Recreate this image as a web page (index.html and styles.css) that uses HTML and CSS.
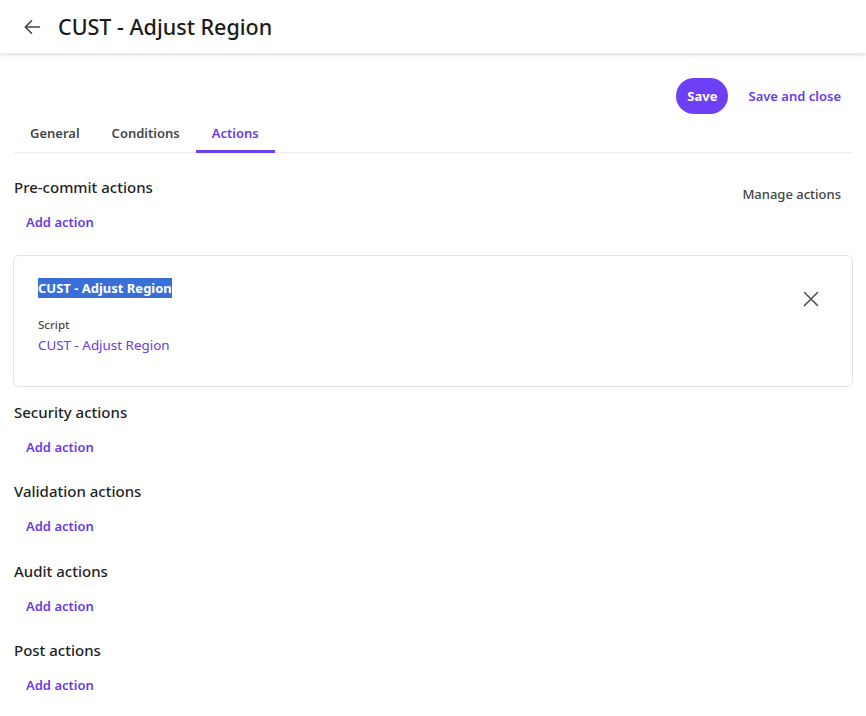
FILE: index.html
```html
<!DOCTYPE html>
<html>
<head>
<meta charset="utf-8">
<link rel="stylesheet" href="styles.css">
</head>
<body>
<header class="topbar">
  <svg class="back" width="18" height="18" viewBox="0 0 18 18"><path d="M16.5 9H2.5M8.5 2.8L2.3 9l6.2 6.2" fill="none" stroke="#424242" stroke-width="1.6" stroke-linecap="round" stroke-linejoin="round"/></svg>
  <h1 class="title">CUST - Adjust Region</h1>
</header>
<main class="page">
  <div class="toolbar">
    <button class="btn-primary">Save</button>
    <button class="btn-link">Save and close</button>
  </div>
  <nav class="tabs">
    <span class="tab">General</span>
    <span class="tab">Conditions</span>
    <span class="tab active">Actions</span>
  </nav>
  <section class="sect first">
    <div class="sect-head">
      <h2 class="sect-title">Pre-commit actions</h2>
      <span class="manage">Manage actions</span>
    </div>
    <a class="add">Add action</a>
  </section>
  <div class="card">
    <div class="card-body">
      <div class="card-title"><span class="sel">CUST - Adjust Region</span></div>
      <div class="label">Script</div>
      <a class="script-link">CUST - Adjust Region</a>
    </div>
    <svg class="close" width="16" height="16" viewBox="0 0 16 16"><path d="M1.5 1.5l13 13M14.5 1.5l-13 13" stroke="#505050" stroke-width="1.6" stroke-linecap="round"/></svg>
  </div>
  <section class="sect">
    <h2 class="sect-title">Security actions</h2>
    <a class="add">Add action</a>
  </section>
  <section class="sect">
    <h2 class="sect-title">Validation actions</h2>
    <a class="add">Add action</a>
  </section>
  <section class="sect">
    <h2 class="sect-title">Audit actions</h2>
    <a class="add">Add action</a>
  </section>
  <section class="sect">
    <h2 class="sect-title">Post actions</h2>
    <a class="add">Add action</a>
  </section>
</main>
</body>
</html>
```
FILE: styles.css
```css
* { box-sizing: border-box; }
html, body { margin: 0; padding: 0; background: #fff; }
body {
  font-family: "Noto Sans", "Open Sans", sans-serif;
  color: #242424;
  width: 866px;
  height: 716px;
  overflow: hidden;
}
.topbar {
  height: 54px;
  display: flex;
  align-items: center;
  padding-left: 23px;
  gap: 17px;
  box-shadow: 0 1px 3px rgba(0,0,0,0.14);
  border-bottom: 1px solid #ececec;
}
.back { display: block; }
.title {
  margin: 0;
  font-size: 21.5px;
  font-weight: 500;
  color: #1b1b1b;
  line-height: 28px;
}
.page { padding: 0 13px 0 14px; }
.toolbar {
  display: flex;
  justify-content: flex-end;
  align-items: center;
  gap: 20px;
  margin-top: 24px;
  padding-right: 12px;
}
.btn-primary {
  height: 36px;
  padding: 0 11px;
  border: none;
  border-radius: 18px;
  background: #6e40f5;
  color: #fff;
  font-family: inherit;
  font-size: 13px;
  font-weight: 700;
}
.btn-link {
  border: none;
  background: none;
  padding: 0;
  font-family: inherit;
  font-size: 13px;
  font-weight: 600;
  color: #6a3be6;
}
.tabs {
  display: flex;
  border-bottom: 1px solid #ededed;
  height: 39px;
}
.tab {
  padding: 0 16px;
  font-size: 13px;
  font-weight: 600;
  color: #474747;
  line-height: 38px;
  height: 39px;
}
.tab.active {
  color: #6a3be6;
  border-bottom: 3px solid #6e40f5;
  line-height: 38px;
}
.sect { display: flex; flex-direction: column; align-items: flex-start; }
.sect.first { margin-top: 24px; }
.sect-head {
  align-self: stretch;
  display: flex;
  justify-content: space-between;
  align-items: flex-start;
}
.sect-title {
  margin: 0;
  font-size: 15px;
  font-weight: 500;
  line-height: 20px;
  color: #1f1f1f;
}
.manage {
  font-size: 13px;
  font-weight: 500;
  color: #444;
  margin-top: 8px;
  margin-right: 12px;
  line-height: 18px;
}
.add {
  margin-top: 10px;
  margin-left: 12px;
  font-size: 13px;
  font-weight: 600;
  color: #6a3be6;
  line-height: 18px;
}
.card {
  margin-top: 24px;
  margin-left: -1px;
  height: 132px;
  border: 1px solid #e2e2e2;
  border-radius: 6px;
  display: flex;
  justify-content: space-between;
  align-items: flex-start;
  padding: 24px 33px 0 24px;
  margin-bottom: 15px;
}
.card-title { font-size: 13px; font-weight: 700; line-height: 17px; }
.sel { background: #3a6fd8; color: #fff; padding: 1px 0; }
.label { margin-top: 20px; font-size: 11.5px; font-weight: 500; color: #4a4a4a; line-height: 16px; }
.script-link { display: block; margin-top: 3px; font-size: 13.4px; color: #6a3be6; line-height: 18px; }
.close { margin-top: 11px; }
.sect + .sect { margin-top: 25.4px; }
.card + .sect { margin-top: 0; }
.sect .sect-title + .add { margin-top: 16px; }
```
